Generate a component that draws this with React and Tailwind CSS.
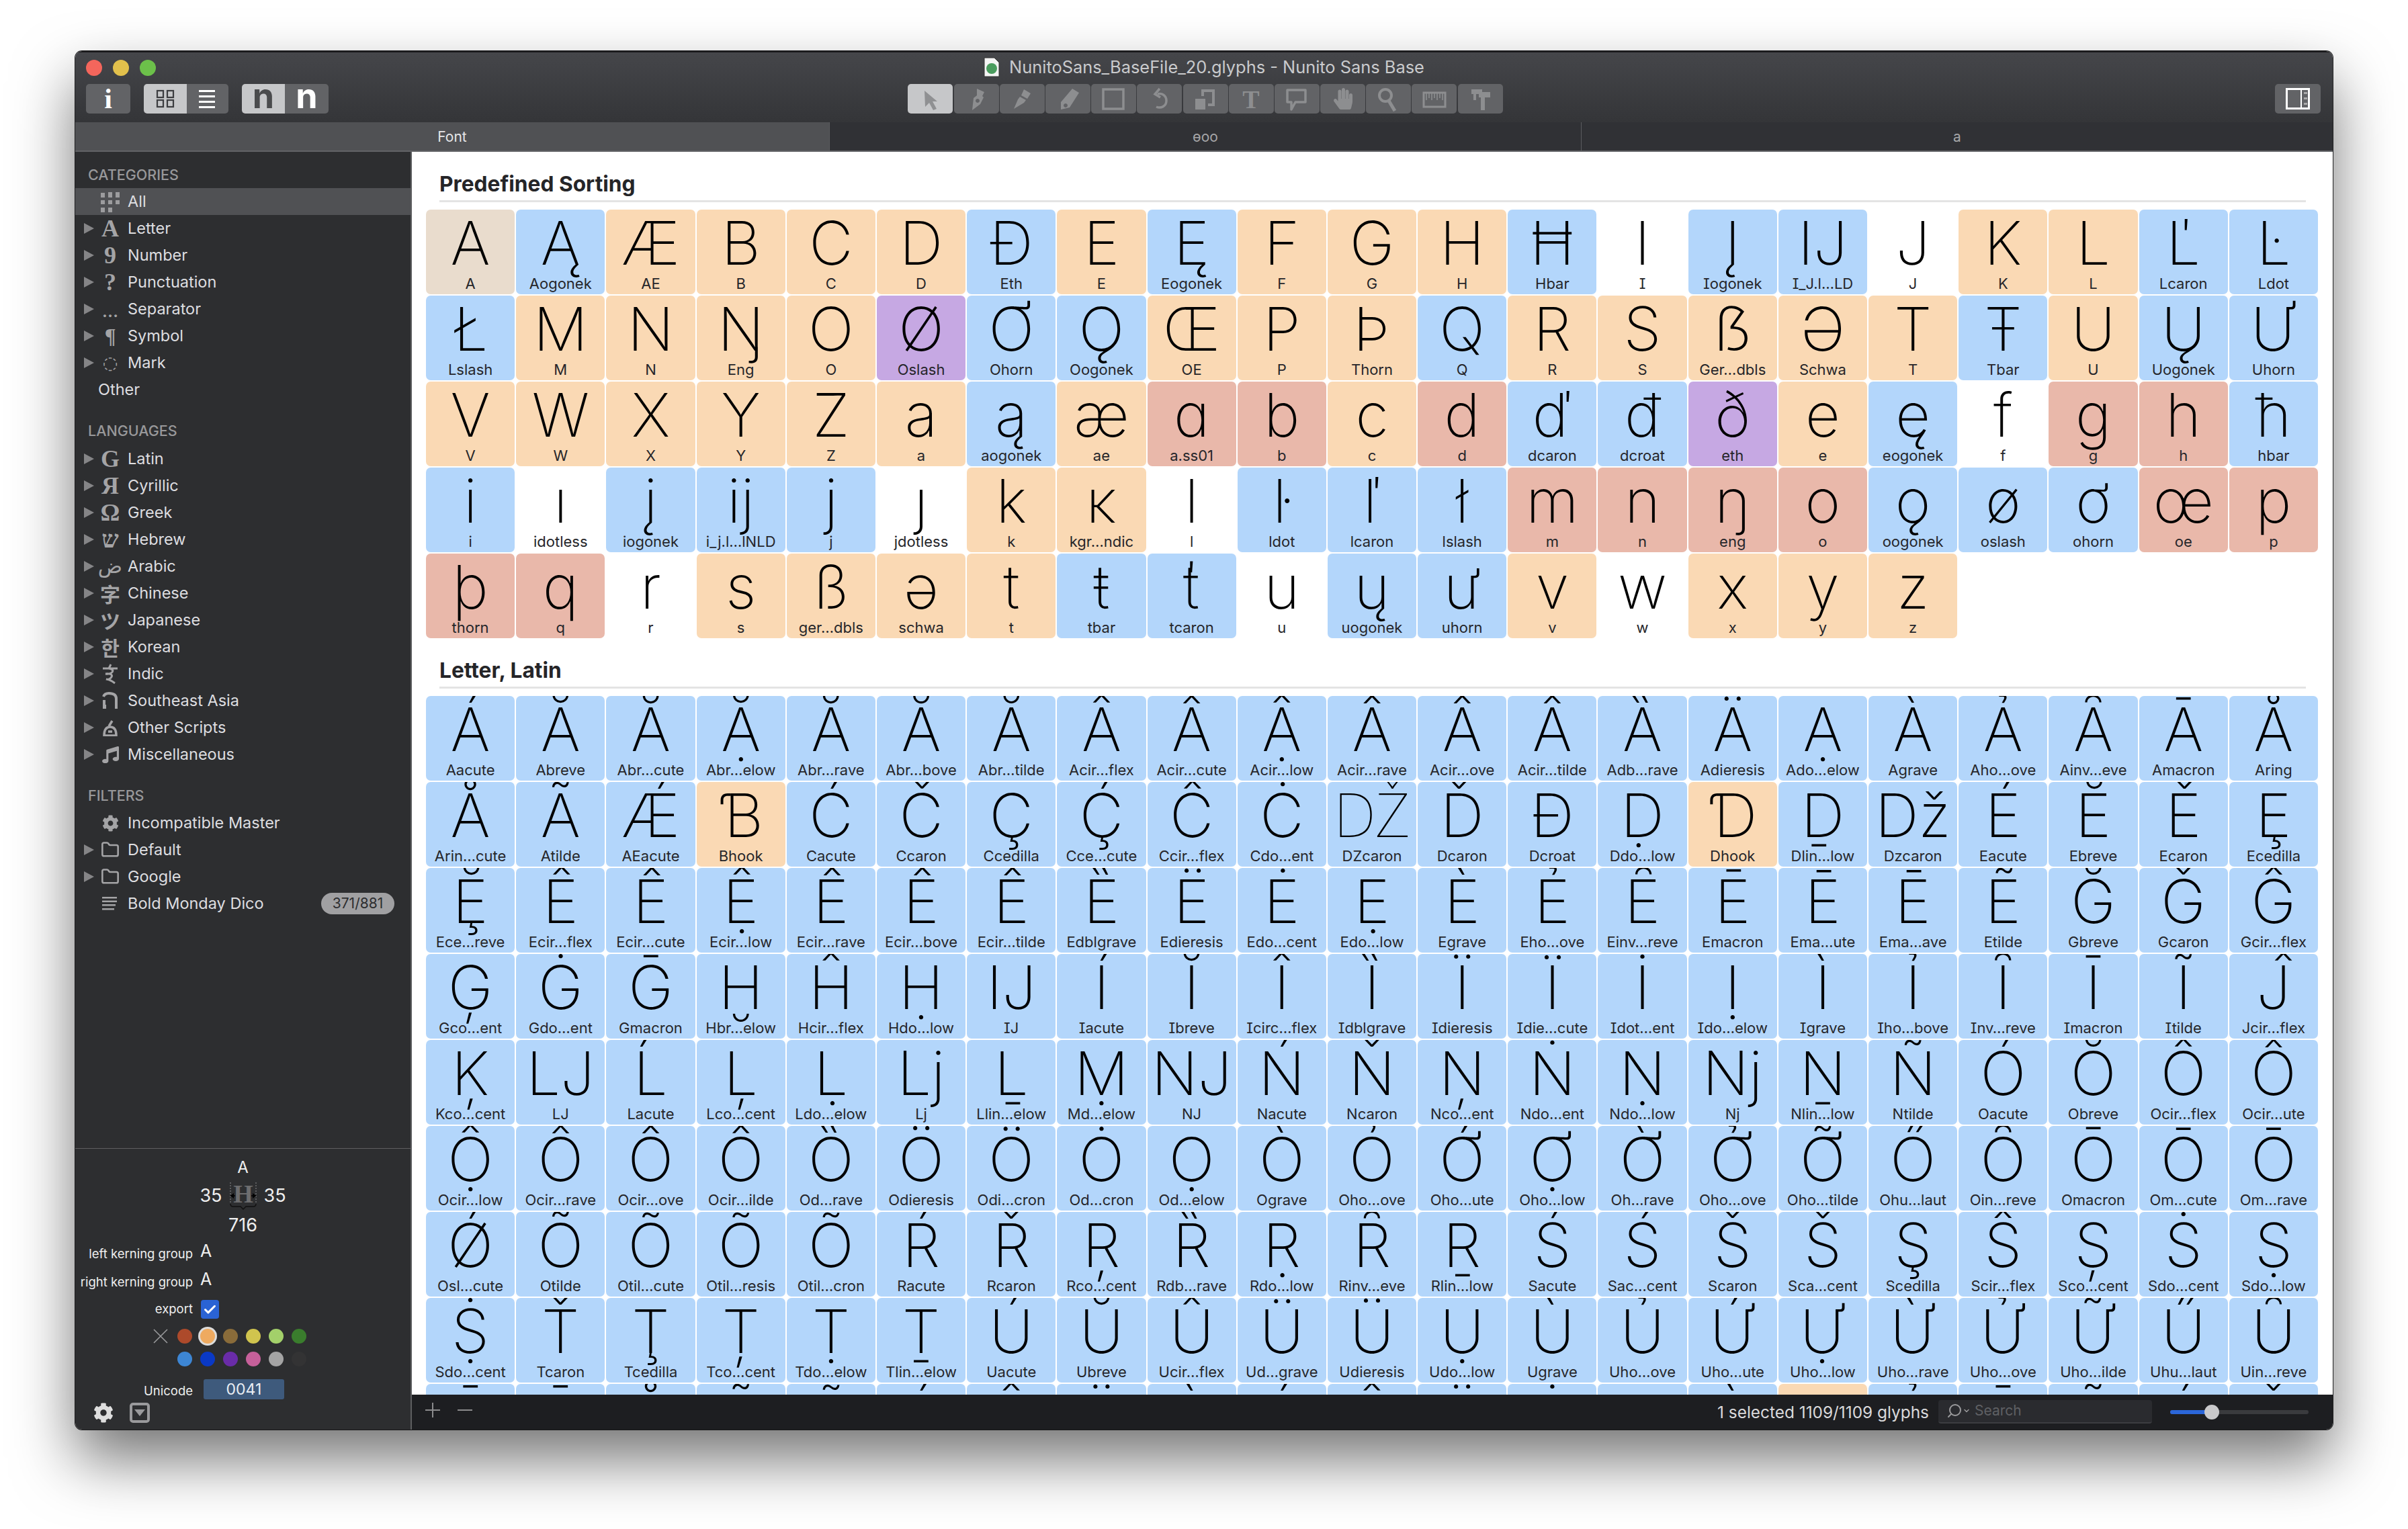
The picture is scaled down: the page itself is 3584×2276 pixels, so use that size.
import React from 'react';
import { Check, Folder, Search, ChevronDown } from 'lucide-react';
import { FaCog, FaHandPaper, FaMusic } from 'react-icons/fa';

const sans = 'font-["Inter","Noto_Sans","DejaVu_Sans",sans-serif]';

const colors = {
  o: 'bg-[#fad9b4]',
  b: 'bg-[#b3d6fb]',
  r: 'bg-[#e9b8aa]',
  p: 'bg-[#c6a8e3]',
  s: 'bg-[#e9dccd]',
  w: 'bg-white',
};

// glyph label colour, comma separated
const parse = (text) =>
  text.trim().split(/\s*,\s*/).map((item) => {
    const [glyph, label, color] = item.split(' ');
    return { glyph, label, color };
  });

const predefined = parse(`
A A s, Ą Aogonek b, Æ AE o, B B o, C C o, D D o, Ð Eth b, E E o, Ę Eogonek b, F F o, G G o, H H o, Ħ Hbar b, I I w, Į Iogonek b, Ĳ I_J.l…LD b, J J w, K K o, L L o, Ľ Lcaron b, Ŀ Ldot b,
Ł Lslash b, M M o, N N o, Ŋ Eng o, O O o, Ø Oslash p, Ơ Ohorn b, Ǫ Oogonek b, Œ OE o, P P o, Þ Thorn o, Q Q b, R R o, S S o, ẞ Ger…dbls o, Ə Schwa o, T T o, Ŧ Tbar b, U U o, Ų Uogonek b, Ư Uhorn b,
V V o, W W o, X X o, Y Y o, Z Z o, a a o, ą aogonek b, æ ae o, ɑ a.ss01 r, b b r, c c o, d d r, ď dcaron b, đ dcroat b, ð eth p, e e o, ę eogonek b, f f w, g g r, h h r, ħ hbar b,
i i b, ı idotless w, į iogonek b, ĳ i_j.l…lNLD b, j j b, ȷ jdotless w, k k o, ĸ kgr…ndic o, l l w, ŀ ldot b, ľ lcaron b, ł lslash b, m m r, n n r, ŋ eng r, o o r, ǫ oogonek b, ø oslash b, ơ ohorn b, œ oe r, p p r,
þ thorn r, q q r, r r w, s s o, ß ger…dbls o, ə schwa o, t t o, ŧ tbar b, ť tcaron b, u u w, ų uogonek b, ư uhorn b, v v o, w w w, x x o, y y o, z z o
`);

const latin = parse(`
Á Aacute b, Ă Abreve b, Ắ Abr…cute b, Ặ Abr…elow b, Ằ Abr…rave b, Ẳ Abr…bove b, Ẵ Abr…tilde b, Â Acir…flex b, Ấ Acir…cute b, Ậ Acir…low b, Ầ Acir…rave b, Ẩ Acir…ove b, Ẫ Acir…tilde b, Ȁ Adb…rave b, Ä Adieresis b, Ạ Ado…elow b, À Agrave b, Ả Aho…ove b, Ȃ Ainv…eve b, Ā Amacron b, Å Aring b,
Ǻ Arin…cute b, Ã Atilde b, Ǽ AEacute b, Ɓ Bhook o, Ć Cacute b, Č Ccaron b, Ç Ccedilla b, Ḉ Cce…cute b, Ĉ Ccir…flex b, Ċ Cdo…ent b, Ǆ DZcaron b, Ď Dcaron b, Đ Dcroat b, Ḍ Ddo…low b, Ɗ Dhook o, Ḏ Dlin…low b, ǅ Dzcaron b, É Eacute b, Ĕ Ebreve b, Ě Ecaron b, Ȩ Ecedilla b,
Ḝ Ece…reve b, Ê Ecir…flex b, Ế Ecir…cute b, Ệ Ecir…low b, Ề Ecir…rave b, Ể Ecir…bove b, Ễ Ecir…tilde b, Ȅ Edblgrave b, Ë Edieresis b, Ė Edo…cent b, Ẹ Edo…low b, È Egrave b, Ẻ Eho…ove b, Ȇ Einv…reve b, Ē Emacron b, Ḗ Ema…ute b, Ḕ Ema…ave b, Ẽ Etilde b, Ğ Gbreve b, Ǧ Gcaron b, Ĝ Gcir…flex b,
Ģ Gco…ent b, Ġ Gdo…ent b, Ḡ Gmacron b, Ḫ Hbr…elow b, Ĥ Hcir…flex b, Ḥ Hdo…low b, Ĳ IJ b, Í Iacute b, Ĭ Ibreve b, Î Icirc…flex b, Ȉ Idblgrave b, Ï Idieresis b, Ḯ Idie…cute b, İ Idot…ent b, Ị Ido…elow b, Ì Igrave b, Ỉ Iho…bove b, Ȋ Inv…reve b, Ī Imacron b, Ĩ Itilde b, Ĵ Jcir…flex b,
Ķ Kco…cent b, Ǉ LJ b, Ĺ Lacute b, Ļ Lco…cent b, Ḷ Ldo…elow b, ǈ Lj b, Ḻ Llin…elow b, Ṃ Md…elow b, Ǌ NJ b, Ń Nacute b, Ň Ncaron b, Ņ Nco…ent b, Ṅ Ndo…ent b, Ṇ Ndo…low b, ǋ Nj b, Ṉ Nlin…low b, Ñ Ntilde b, Ó Oacute b, Ŏ Obreve b, Ô Ocir…flex b, Ố Ocir…ute b,
Ộ Ocir…low b, Ồ Ocir…rave b, Ổ Ocir…ove b, Ỗ Ocir…ilde b, Ȍ Od…rave b, Ö Odieresis b, Ȫ Odi…cron b, Ȱ Od…cron b, Ọ Od…elow b, Ò Ograve b, Ỏ Oho…ove b, Ớ Oho…ute b, Ợ Oho…low b, Ờ Oh…rave b, Ở Oho…ove b, Ỡ Oho…tilde b, Ő Ohu…laut b, Ȏ Oin…reve b, Ō Omacron b, Ṓ Om…cute b, Ṑ Om…rave b,
Ǿ Osl…cute b, Õ Otilde b, Ṍ Otil…cute b, Ṏ Otil…resis b, Ȭ Otil…cron b, Ŕ Racute b, Ř Rcaron b, Ŗ Rco…cent b, Ȑ Rdb…rave b, Ṛ Rdo…low b, Ȓ Rinv…eve b, Ṟ Rlin…low b, Ś Sacute b, Ṥ Sac…cent b, Š Scaron b, Ṧ Sca…cent b, Ş Scedilla b, Ŝ Scir…flex b, Ș Sco…cent b, Ṡ Sdo…cent b, Ṣ Sdo…low b,
Ṩ Sdo…cent b, Ť Tcaron b, Ţ Tcedilla b, Ț Tco…cent b, Ṭ Tdo…elow b, Ṯ Tlin…elow b, Ú Uacute b, Ŭ Ubreve b, Û Ucir…flex b, Ǜ Ud…grave b, Ü Udieresis b, Ụ Udo…low b, Ù Ugrave b, Ủ Uho…ove b, Ứ Uho…ute b, Ự Uho…low b, Ừ Uho…rave b, Ử Uho…ove b, Ữ Uho…ilde b, Ű Uhu…laut b, Ȗ Uin…reve b,
Ū Umacron b, Ū Umacron b, Ů Uring b, Ũ Utilde b, Ṹ Util…cute b, Ẃ Wacute b, Ŵ Wcir…flex b, Ẅ Wdieresis b, Ẁ Wgrave b, Ý Yacute b, Ŷ Ycir…flex b, Ÿ Ydieresis b, Ẏ Ydo…ent b, Ỵ Ydo…low b, Ỳ Ygrave b, Ƴ Yhook o, Ỷ Yho…ove b, Ȳ Ymacron b, Ỹ Ytilde b, Ź Zacute b, Ž Zcaron b
`);

const GlyphCell = ({ glyph, label, color }) => (
  <div className={`h-[126px] overflow-hidden rounded-[7px] ${colors[color]} flex flex-col items-center`}>
    <div className={`h-[100px] leading-[100px] text-[90px] [font-weight:150] text-black whitespace-nowrap ${sans}`}>{glyph}</div>
    <div className={`relative -mt-[1px] text-[22px] leading-[22px] text-[#26262a] whitespace-nowrap [font-feature-settings:'cv08'] ${sans}`}>{label}</div>
  </div>
);

const Section = ({ title, glyphs }) => (
  <section className="pt-[29px]">
    <div className="ml-[41px] mr-[40px] border-b-[3px] border-[#e4e4e4] pb-[5px]">
      <h2 className={`text-[31.7px] leading-[38px] font-bold text-[#252528] ${sans}`}>{title}</h2>
    </div>
    <div className="grid grid-cols-[repeat(21,minmax(0,1fr))] gap-[2px] ml-[21px] mr-[22px] mt-[11px]">
      {glyphs.map((g, i) => <GlyphCell key={i} {...g} />)}
    </div>
  </section>
);

// ---- sidebar ----

const serif = 'font-["Liberation_Serif",serif] font-bold';

const AllIcon = () => (
  <svg width="30" height="32" viewBox="0 0 30 32" fill="#9c9c9e">
    <rect x="1" y="3" width="6" height="7" /><rect x="12" y="2" width="6" height="8" /><rect x="23" y="2" width="6" height="8" />
    <rect x="1" y="14" width="6" height="6" /><rect x="12" y="14" width="6" height="6" /><rect x="23" y="14" width="6" height="6" />
    <rect x="1" y="25" width="6" height="7" /><rect x="12" y="25" width="6" height="7" />
  </svg>
);

const IndicIcon = () => (
  <svg width="26" height="32" viewBox="0 0 26 32" fill="none" stroke="#a4a4a6" strokeWidth="3">
    <path d="M2 8h22M14 2l-3 6M11 8c6 1 8 4 3 7-4 2-8 1-8 1M6 16c8-1 12 2 8 6-2 2-5 3-7 2M7 24c5 0 9 3 13 6" />
  </svg>
);

const ThaiIcon = () => (
  <svg width="24" height="26" viewBox="0 0 24 26" fill="none" stroke="#a4a4a6" strokeWidth="4">
    <path d="M3 25V12M21 25V10C21 4 16 2 10 2 6 2 3 4 2 7" />
    <rect x="1" y="19" width="5" height="6" fill="#a4a4a6" stroke="none" />
  </svg>
);

const OtherIcon = () => (
  <svg width="24" height="26" viewBox="0 0 24 26" fill="none" stroke="#a4a4a6" strokeWidth="3.5">
    <path d="M15 3l-5 8M3 25c0-9 3-13 9-13s9 4 9 13zM9 19h6" />
  </svg>
);

const ListIcon = () => (
  <svg width="24" height="22" viewBox="0 0 24 22" fill="#a4a4a6">
    <rect y="1" width="22" height="2.5" /><rect y="6.5" width="22" height="2.5" /><rect y="12" width="20" height="2.5" /><rect y="18" width="18" height="2.5" />
  </svg>
);

const Tx = ({ cls, children }) => <span className={`text-[#a4a4a6] leading-none ${cls}`}>{children}</span>;

const categories = [
  { label: 'Letter', icon: <Tx cls={`text-[36px] ${serif}`}>A</Tx> },
  { label: 'Number', icon: <Tx cls={`text-[36px] ${serif}`}>9</Tx> },
  { label: 'Punctuation', icon: <Tx cls={`text-[36px] ${serif}`}>?</Tx> },
  { label: 'Separator', icon: <Tx cls={`text-[24px] pt-[8px] ${serif}`}>…</Tx> },
  { label: 'Symbol', icon: <Tx cls={`text-[31px] ${serif}`}>¶</Tx> },
  { label: 'Mark', icon: <Tx cls='text-[26px] font-["DejaVu_Sans",sans-serif]'>◌</Tx> },
];

const languages = [
  { label: 'Latin', icon: <Tx cls={`text-[36px] ${serif}`}>G</Tx> },
  { label: 'Cyrillic', icon: <Tx cls={`text-[36px] ${serif}`}>Я</Tx> },
  { label: 'Greek', icon: <Tx cls={`text-[36px] ${serif}`}>Ω</Tx> },
  { label: 'Hebrew', icon: <Tx cls='text-[36px] font-bold font-["Liberation_Serif","DejaVu_Serif",serif]'>ש</Tx> },
  { label: 'Arabic', icon: <Tx cls='text-[30px] font-["DejaVu_Sans",sans-serif]'>ض</Tx> },
  { label: 'Chinese', icon: <Tx cls='text-[30px] font-bold font-["Noto_Sans_CJK_SC",sans-serif]'>字</Tx> },
  { label: 'Japanese', icon: <Tx cls='text-[30px] font-bold font-["Noto_Sans_CJK_JP",sans-serif]'>ツ</Tx> },
  { label: 'Korean', icon: <Tx cls='text-[30px] font-bold font-["Noto_Sans_CJK_KR",sans-serif]'>한</Tx> },
  { label: 'Indic', icon: <IndicIcon /> },
  { label: 'Southeast Asia', icon: <ThaiIcon /> },
  { label: 'Other Scripts', icon: <OtherIcon /> },
  { label: 'Miscellaneous', icon: <FaMusic size={25} color="#a4a4a6" /> },
];

const filters = [
  { label: 'Incompatible Master', icon: <FaCog size={25} color="#a4a4a6" />, noArrow: true },
  { label: 'Default', icon: <Folder size={28} color="#a4a4a6" strokeWidth={2.2} /> },
  { label: 'Google', icon: <Folder size={28} color="#a4a4a6" strokeWidth={2.2} /> },
  { label: 'Bold Monday Dico', icon: <ListIcon />, noArrow: true, badge: '371/881' },
];

const Arrow = () => <span className="w-0 h-0 border-y-[8px] border-y-transparent border-l-[15px] border-l-[#858587]" />;

const Row = ({ label, icon, noArrow, badge, active, plain }) => (
  <div className={`h-[40px] flex items-center pl-[13px] pr-[24px] ${active ? 'bg-[#505154]' : ''}`}>
    <span className="w-[15px] flex items-center">{!noArrow && <Arrow />}</span>
    {plain ? <span className="w-[6px]" /> : <span className="w-[32px] ml-[8px] mr-[10px] flex justify-center items-center h-[40px]">{icon}</span>}
    <span className={`text-[23.5px] text-[#dedee0] ${sans}`}>{label}</span>
    {badge && <span className={`ml-auto h-[32px] w-[109px] rounded-full bg-[#a0a0a2] text-[#2d2e30] text-[21px] leading-[32px] text-center ${sans}`}>{badge}</span>}
  </div>
);

const Heading = ({ children, cls }) => (
  <div className={`h-[40px] flex items-center pl-[19px] text-[21.5px] font-medium text-[#98989a] ${sans} ${cls}`}>{children}</div>
);

const MetricsGlyph = () => (
  <svg width="44" height="42" viewBox="0 0 44 42">
    <text x="22" y="31" textAnchor="middle" fontFamily="Liberation Serif" fontWeight="700" fontSize="38" fill="#6d6d6f">H</text>
    <path d="M3 1V31M41 1V31" stroke="#8a8a8c" strokeWidth="1" strokeDasharray="2 2" fill="none" />
    <path d="M3 21H10M34 21H41" stroke="#000" strokeWidth="1.5" />
    <path d="M3 21l5-4v8zM41 21l-5-4v8z" fill="#000" />
    <path d="M3 33c0 3 2 4 4 4h11l4 4 4-4h11c2 0 4-1 4-4" fill="none" stroke="#111" strokeWidth="1.5" />
  </svg>
);

const FieldRow = ({ label, height, children }) => (
  <div className="flex items-center" style={{ height }}>
    <span className={`w-[175px] text-right text-[18.5px] text-[#eeeeee] whitespace-nowrap ${sans}`}>{label}</span>
    <div className="ml-[11px] flex items-center">{children}</div>
  </div>
);

const swatches1 = ['bg-[#ad4a2b]', 'bg-[#eeaa60]', 'bg-[#8a6c3a]', 'bg-[#d0c44e]', 'bg-[#a3d06a]', 'bg-[#3a7d2d]'];
const swatches2 = ['bg-[#3d86d4]', 'bg-[#0a39c5]', 'bg-[#6a2ca8]', 'bg-[#c6609a]', 'bg-[#a4a4a4]', 'bg-[#333334]'];

const GlyphInfo = () => (
  <div className="mt-auto border-t-[1px] border-[#5f5f61] pt-[11px] pb-[10px]">
    <div className={`h-[34px] leading-[34px] text-center text-[24px] text-[#efefef] ${sans}`}>A</div>
    <div className={`h-[44px] flex items-center justify-center gap-[9px] text-[27px] text-[#efefef] ${sans} mt-[3px]`}>
      <span>35</span>
      <MetricsGlyph />
      <span>35</span>
    </div>
    <div className={`h-[44px] leading-[44px] text-center text-[27px] text-[#efefef] ${sans}`}>716</div>
    <FieldRow label="left kerning group" height={42}>
      <span className={`text-[25px] text-[#efefef] ${sans} -mt-[8px]`}>A</span>
    </FieldRow>
    <FieldRow label="right kerning group" height={42}>
      <span className={`text-[25px] text-[#efefef] ${sans} -mt-[8px]`}>A</span>
    </FieldRow>
    <FieldRow label="export" height={38}>
      <span className="w-[27px] h-[28px] rounded-[4px] bg-[#2a63d4] flex items-center justify-center ml-[1px]">
        <Check size={21} color="white" strokeWidth={3.5} />
      </span>
    </FieldRow>
    <div className="h-[38px] flex items-center pl-[116px] mt-[2px]">
      <svg width="22" height="22" viewBox="0 0 22 22" stroke="#9a9a9c" strokeWidth="1.6"><path d="M1 1L21 21M21 1L1 21" /></svg>
      <div className="flex gap-[12px] ml-[14px]">
        {swatches1.map((c, i) => (
          <span key={i} className={`w-[22px] h-[22px] rounded-full ${c} ${i === 1 ? 'ring-[3px] ring-[#dcdcdc]' : ''}`} />
        ))}
      </div>
    </div>
    <div className="h-[30px] flex items-center pl-[152px] gap-[12px]">
      {swatches2.map((c, i) => <span key={i} className={`w-[22px] h-[22px] rounded-full ${c}`} />)}
    </div>
    <div className="pt-[10px]">
      <FieldRow label="Unicode" height={46}>
        <span className={`w-[120px] h-[30px] rounded-[3px] bg-[#3e5a7c] text-center text-[23px] leading-[30px] text-[#e8edf3] ml-[5px] -mt-[6px] ${sans}`}>0041</span>
      </FieldRow>
    </div>
    <div className="h-[30px] flex items-center pl-[27px] gap-[24px] -mt-[6px]">
      <FaCog size={30} color="#dedede" />
      <span className="w-[30px] h-[30px] rounded-[5px] border-[4px] border-[#9a9a9c] flex items-center justify-center">
        <span className="w-0 h-0 border-x-[8px] border-x-transparent border-t-[10px] border-t-[#9a9a9c]" />
      </span>
    </div>
  </div>
);

const Sidebar = () => (
  <aside className="w-[501px] shrink-0 bg-[#2d2e30] border-r-[2px] border-[#5d5e60] flex flex-col">
    <div className="pt-[14px]">
      <Heading>CATEGORIES</Heading>
      <Row label="All" icon={<AllIcon />} noArrow active />
      {categories.map((r) => <Row key={r.label} {...r} />)}
      <Row label="Other" noArrow plain />
      <Heading cls="mt-[21px] mb-[2px]">LANGUAGES</Heading>
      {languages.map((r) => <Row key={r.label} {...r} />)}
      <Heading cls="mt-[21px] mb-[1px]">FILTERS</Heading>
      {filters.map((r) => <Row key={r.label} {...r} />)}
    </div>
    <GlyphInfo />
  </aside>
);

// ---- toolbar ----

const ICON = '#8d8e90';

const toolIcons = [
  <path d="M21 10L40 26H33L39 37L34 39L28 28L22 34Z" fill="#8f9092" />,
  <path fillRule="evenodd" d="M31 7L42 12L39 18L41 20L36 30L24 39L26 21L31 17ZM32 22a3 3 0 1 0 .01 0Z" fill={ICON} />,
  <path d="M33 8L43 14L38 22L29 17ZM27 19L36 24L33 28L18 37L24 23Z" fill={ICON} />,
  <path fillRule="evenodd" d="M37 7L47 13L33 35L20 38L20 27ZM27 29a3 3 0 1 0 .01 0Z" fill={ICON} />,
  <rect x="14" y="8" width="30" height="29" fill="none" stroke={ICON} strokeWidth="3.5" />,
  <g fill="none" stroke={ICON} strokeWidth="3.5"><path d="M27 15c6-2 13 2 13 10s-8 12-15 9" /><path d="M30 7L23 15L31 20" /></g>,
  <g fill={ICON}><rect x="15" y="22" width="15" height="16" /><path fillRule="evenodd" d="M24 8H44V33H34V29H40V12H28V18H24Z" /></g>,
  <text x="30" y="36" textAnchor="middle" fontFamily="Liberation Serif" fontWeight="700" fontSize="38" fill={ICON}>T</text>,
  <path d="M16 9H43V27H28L22 38V27H16Z" fill="none" stroke={ICON} strokeWidth="3.5" strokeLinejoin="round" />,
  null,
  <g fill="none" stroke={ICON} strokeWidth="4"><circle cx="25" cy="17" r="9" /><path d="M30 25L39 40" strokeWidth="5" /></g>,
  <g fill="none" stroke={ICON} strokeWidth="3"><rect x="14" y="13" width="32" height="21" /><path d="M18 14V24M22 14V21M26 14V24M30 14V21M34 14V24M38 14V21M42 14V24" strokeWidth="1.6" /></g>,
  <path d="M17 8H33V12H45V20H37V39H31V20H28V15H24V24H20V15H17Z" fill={ICON} />,
];

const Toolbar = () => (
  <div className="flex gap-[1.2px] ml-[6px]">
    {toolIcons.map((icon, i) => (
      <div key={i} className={`w-[67px] h-[44px] rounded-[5px] flex items-center justify-center ${i === 0 ? 'bg-[#c6c7c9]' : 'bg-[#626366]'}`}>
        {icon ? (
          <svg width="60" height="44" viewBox="0 0 60 44">{icon}</svg>
        ) : (
          <FaHandPaper size={32} color={ICON} />
        )}
      </div>
    ))}
  </div>
);

const GridGlyph = () => (
  <svg width="28" height="28" viewBox="0 0 28 28" fill="none" stroke="#3c3d40" strokeWidth="2.2">
    <rect x="2" y="2" width="9" height="10" /><rect x="17" y="2" width="9" height="10" />
    <rect x="2" y="16" width="9" height="10" /><rect x="17" y="16" width="9" height="10" />
  </svg>
);

const ListGlyph = () => (
  <svg width="26" height="28" viewBox="0 0 26 28" fill="white">
    <rect y="1" width="24" height="3" /><rect y="9" width="24" height="3" /><rect y="17" width="24" height="3" /><rect y="25" width="24" height="3" />
  </svg>
);

const TopBar = () => (
  <div className="h-[106px] bg-gradient-to-b from-[#45464a] to-[#343538] border-t-[2px] border-[#1a1a1c] shrink-0">
    <div className="h-[47px] grid grid-cols-[1fr_auto_1fr] items-center pl-[16px]">
      <div className="flex gap-[16px] -mt-[2px]">
        <span className="w-[24px] h-[24px] rounded-full bg-[#f4665c]" />
        <span className="w-[24px] h-[24px] rounded-full bg-[#e2c04c]" />
        <span className="w-[24px] h-[24px] rounded-full bg-[#6cc04a]" />
      </div>
      <div className="flex items-center gap-[14px] -mt-[2px] pr-[16px]">
        <svg width="24" height="30" viewBox="0 0 24 30">
          <path d="M1 1H16L23 8V29H1Z" fill="#f4f4f4" stroke="#333" strokeWidth="1" />
          <circle cx="12" cy="17" r="8" fill="#4a9c5e" />
        </svg>
        <span className={`text-[25.4px] text-[#c9cacc] whitespace-nowrap ${sans}`}>NunitoSans_BaseFile_20.glyphs - Nunito Sans Base</span>
      </div>
      <span />
    </div>
    <div className="h-[44px] grid grid-cols-[1fr_auto_1fr] items-center px-[16px] pr-[18px]">
      <div className="flex">
        <div className={`w-[66px] h-[44px] rounded-[5px] bg-[#626366] flex items-center justify-center text-[42px] leading-none text-white ${serif}`}>i</div>
        <div className="ml-[20px] flex h-[44px] rounded-[5px] overflow-hidden">
          <span className="w-[64px] bg-[#c6c7c9] flex items-center justify-center"><GridGlyph /></span>
          <span className="w-[62px] bg-[#626366] flex items-center justify-center"><ListGlyph /></span>
        </div>
        <div className={`ml-[20px] flex h-[44px] text-[52px] leading-[36px] font-bold ${sans}`}>
          <span className="w-[64px] rounded-l-[5px] bg-[#c6c7c9] text-[#4a4b4d] text-center">n</span>
          <span className="w-[65px] rounded-r-[5px] bg-[#626366] text-white text-center">n</span>
        </div>
      </div>
      <Toolbar />
      <div className="flex justify-end">
        <div className="w-[68px] h-[44px] rounded-[5px] bg-[#626366] flex items-center justify-center">
          <svg width="36" height="32" viewBox="0 0 36 32" fill="none">
            <rect x="1.5" y="1.5" width="33" height="29" stroke="white" strokeWidth="3" />
            <path d="M23 2V30" stroke="white" strokeWidth="2" />
            <rect x="27" y="6" width="5" height="3" fill="#aaa" /><rect x="27" y="14" width="5" height="3" fill="#aaa" /><rect x="27" y="22" width="5" height="3" fill="#aaa" />
          </svg>
        </div>
      </div>
    </div>
  </div>
);

const Tabs = () => (
  <div className={`h-[44px] shrink-0 flex border-b-[2px] border-[#626366] text-[21px] pt-0 ${sans}`}>
    <div className="w-[1122px] bg-[#505154] text-[#e6e6e8] flex items-center justify-center pt-[2px]">Font</div>
    <div className="w-[1119px] bg-[#303135] text-[#a6a6a8] flex items-center justify-center border-l-[1px] border-[#5b5c5f] pt-[2px]">ɵoo</div>
    <div className="flex-1 bg-[#303135] text-[#a6a6a8] flex items-center justify-center border-l-[1px] border-[#5b5c5f] pt-[2px]">a</div>
  </div>
);

const Footer = () => (
  <div className={`h-[52px] shrink-0 bg-[#1d1e21] flex items-center ${sans}`}>
    <svg width="100" height="24" viewBox="0 0 100 24" className="ml-[20px] -mt-[6px]" stroke="#8b8b8d" strokeWidth="2">
      <path d="M0 12H22M11 1V23M48 12H70" />
    </svg>
    <span className="ml-auto text-[24.4px] text-[#d9d9db] whitespace-nowrap">1 selected 1109/1109 glyphs</span>
    <div className="ml-[14px] w-[318px] h-[35px] rounded-[4px] bg-[#2a2b2f] border-b-[2px] border-[#3c3d41] flex items-center pl-[12px] -mt-[2px]">
      <Search size={24} color="#9a9a9c" className="-scale-x-100" />
      <ChevronDown size={12} color="#9a9a9c" strokeWidth={3} />
      <span className="ml-[6px] text-[21px] text-[#5f6064]">Search</span>
    </div>
    <div className="relative ml-[27px] mr-[36px] w-[206px] h-[6px] rounded-full bg-[#3a3b3e]">
      <div className="h-[6px] w-[62px] rounded-full bg-[#2b66d9]" />
      <div className="absolute left-[51px] -top-[8px] w-[22px] h-[22px] rounded-full bg-[#c9c9cb]" />
    </div>
  </div>
);

export default function App() {
  return (
    <div className="h-[2276px] bg-white overflow-hidden pt-[76px] pl-[112px]">
      <div className="w-[3360px] h-[2052px] rounded-[10px] overflow-hidden flex flex-col shadow-[0_44px_90px_rgba(0,0,0,0.55),0_0_0_1px_#2a2a2c]">
        <TopBar />
        <Tabs />
        <div className="flex-1 flex min-h-0">
          <Sidebar />
          <div className="flex-1 min-w-0 flex flex-col">
            <div className="flex-1 min-h-0 overflow-hidden bg-white">
              <Section title="Predefined Sorting" glyphs={predefined} />
              <Section title="Letter, Latin" glyphs={latin} />
            </div>
            <Footer />
          </div>
        </div>
      </div>
    </div>
  );
}
